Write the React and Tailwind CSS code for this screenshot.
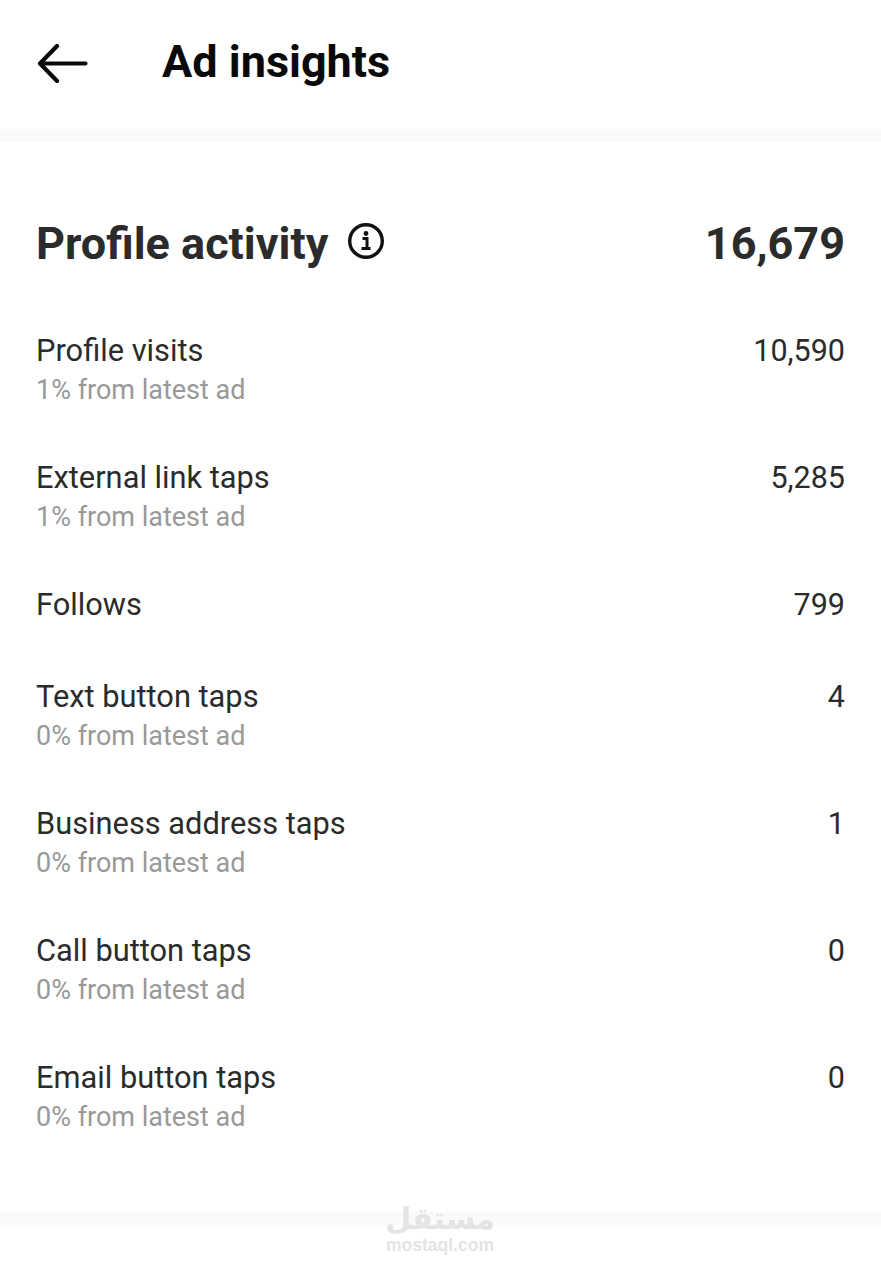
const rows = [
  ["Profile visits", "1% from latest ad", "10,590"],
  ["External link taps", "1% from latest ad", "5,285"],
  ["Follows", null, "799"],
  ["Text button taps", "0% from latest ad", "4"],
  ["Business address taps", "0% from latest ad", "1"],
  ["Call button taps", "0% from latest ad", "0"],
  ["Email button taps", "0% from latest ad", "0"],
];

function Row({ label, sub, value }) {
  return (
    <div className={sub ? "flex justify-between pb-[49px]" : "flex justify-between pb-[53px]"}>
      <div>
        <div className="text-[30.8px] leading-[39px] text-[#2b2b2b]">{label}</div>
        {sub && <div className="text-[27px] leading-[39px] pt-[1px] mb-[-1px] text-[#999999]">{sub}</div>}
      </div>
      <div className="text-[30.5px] leading-[39px] text-[#2b2b2b]">{value}</div>
    </div>
  );
}

export default function App() {
  return (
    <div className="relative w-[881px] h-[1280px] overflow-hidden bg-white font-['Roboto',sans-serif]">
      <header className="h-[129px] flex items-center pl-[36px] pb-[4px]">
        <svg width="54" height="40" viewBox="0 0 54 40" fill="none" stroke="#0a0a0a" strokeWidth="4.2" strokeLinecap="round" strokeLinejoin="round" className="shrink-0">
          <path d="M49.5 20.5H4M21 3 4 20.5 21 38" />
        </svg>
        <h1 className="ml-[72px] mb-[2px] text-[45px] leading-[50px] font-bold text-[#0a0a0a]">Ad insights</h1>
      </header>
      <div className="h-[13px] bg-[#fafafa]" />
      <main className="px-[36px] pt-[74px]">
        <div className="flex items-center justify-between h-[56px] mb-[59px]">
          <div className="flex items-center gap-[19px]">
            <h2 className="text-[45px] leading-[56px] font-bold text-[#2b2b2b]">Profile activity</h2>
            <svg width="38" height="38" viewBox="0 0 38 38" fill="none" className="mb-[7px]">
              <circle cx="19" cy="19" r="16.3" stroke="#111" strokeWidth="3.4" />
              <circle cx="19" cy="11.5" r="2.4" fill="#111" />
              <path d="M15.5 16.5H20V25M14.5 26.5H23.5" stroke="#111" strokeWidth="3" />
            </svg>
          </div>
          <div className="text-[45px] leading-[56px] font-bold text-[#2b2b2b]">16,679</div>
        </div>
        <div>
          {rows.map(([label, sub, value]) => (
            <Row key={label} label={label} sub={sub} value={value} />
          ))}
        </div>
      </main>
      <div className="absolute left-0 right-0 top-[1212px] h-[13px] bg-[#fafafa]" />
      <div className="absolute left-[385px] top-[1199px] w-[110px] flex flex-col items-center text-[#e4e4e4]">
        <div dir="rtl" lang="ar" className="text-[30px] leading-[40px] font-bold font-['DejaVu_Sans',sans-serif]">مستقل</div>
        <div className="mt-[-4px] text-[17.5px] leading-[20px] font-bold font-['Liberation_Sans',sans-serif] whitespace-nowrap">mostaql.com</div>
      </div>
    </div>
  );
}
